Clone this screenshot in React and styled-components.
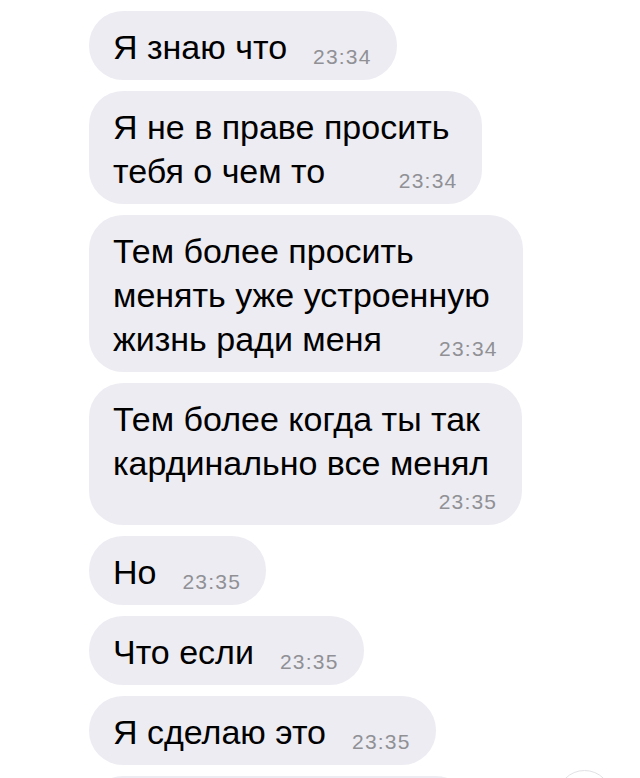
import React from "react";
import styled, { createGlobalStyle } from "styled-components";

const Global = createGlobalStyle`
  html, body {
    margin: 0;
    padding: 0;
    background: #ffffff;
    overflow: hidden;
  }
  body {
    width: 640px;
    height: 778px;
    font-family: "Liberation Sans", Arial, sans-serif;
    -webkit-font-smoothing: antialiased;
  }
`;

const Chat = styled.div`
  position: relative;
  height: 778px;
  overflow: hidden;
  box-sizing: border-box;
  padding: 11px 0 0 89px;
  display: flex;
  flex-direction: column;
  align-items: flex-start;
  gap: 11px;
`;

const Bubble = styled.div`
  display: inline-flex;
  flex-direction: column;
  align-items: stretch;
  box-sizing: border-box;
  background: #ececf2;
  border-radius: 34px;
  padding: 14px 26px 11px 24px;
  min-width: ${(p) => (p.$width ? `${p.$width}px` : "0")};
  min-height: ${(p) => (p.$width ? "69px" : "0")};
  flex-shrink: 0;
`;

const Line = styled.div`
  font-size: 34px;
  line-height: 44px;
  color: #000000;
  white-space: nowrap;
  padding-right: 7px;
`;

const LastRow = styled.div`
  display: flex;
  align-items: flex-end;
  justify-content: ${(p) => (p.$alone ? "flex-end" : "space-between")};
  gap: 26px;
  margin-top: ${(p) => (p.$alone ? "4px" : "0")};
`;

const LastText = styled.span`
  font-size: 34px;
  line-height: 44px;
  color: #000000;
  white-space: nowrap;
`;

const Time = styled.span`
  font-size: 21px;
  line-height: 25px;
  letter-spacing: 1.2px;
  margin-right: -1px;
  color: #909095;
  white-space: nowrap;
`;

const ScrollButton = styled.div`
  position: absolute;
  left: 557px;
  top: 770px;
  width: 55px;
  height: 55px;
  border-radius: 50%;
  box-sizing: border-box;
  background: #ffffff;
  border: 1px solid #e2e2e6;
`;

const messages = [
  { lines: ["Я знаю что"], time: "23:34" },
  { lines: ["Я не в праве просить", "тебя о чем то"], time: "23:34" },
  {
    lines: ["Тем более просить", "менять уже устроенную", "жизнь ради меня"],
    time: "23:34",
  },
  {
    lines: ["Тем более когда ты так", "кардинально все менял"],
    time: "23:35",
    timeAlone: true,
  },
  { lines: ["Но"], time: "23:35" },
  { lines: ["Что если"], time: "23:35" },
  { lines: ["Я сделаю это"], time: "23:35" },
];

function Message({ lines, time, timeAlone }) {
  const body = timeAlone ? lines : lines.slice(0, -1);
  const last = timeAlone ? null : lines[lines.length - 1];
  return (
    <Bubble>
      {body.map((l, i) => (
        <Line key={i}>{l}</Line>
      ))}
      <LastRow $alone={timeAlone}>
        {last && <LastText>{last}</LastText>}
        <Time>{time}</Time>
      </LastRow>
    </Bubble>
  );
}

export default function App() {
  return (
    <>
      <Global />
      <Chat>
        {messages.map((m, i) => (
          <Message key={i} {...m} />
        ))}
        <Bubble $width={381} />
        <ScrollButton />
      </Chat>
    </>
  );
}
